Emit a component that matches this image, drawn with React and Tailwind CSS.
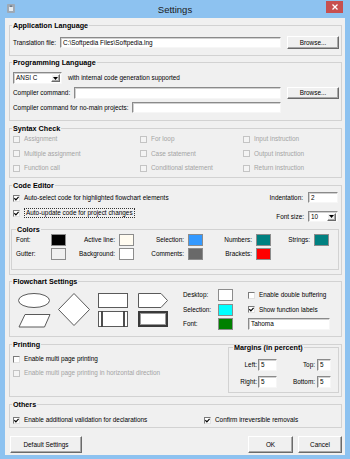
import React from 'react';

const sunken =
  'border border-t-[#8a8a8a] border-l-[#8a8a8a] border-r-[#f6f6f6] border-b-[#f6f6f6] shadow-[inset_1px_1px_0_#d0d0d0]';
const raised =
  'border border-t-white border-l-white border-r-[#6a6a6a] border-b-[#6a6a6a] shadow-[inset_-1px_-1px_0_#a8a8a8]';

function Group({ title, className = '', legend = 'ml-[2px]', body = '', children }) {
  return (
    <fieldset className={`border border-[#d2d2d2] ${className}`}>
      <legend className={`${legend} px-[1px] text-[7.2px] font-bold leading-[9px]`}>{title}</legend>
      <div className={body}>{children}</div>
    </fieldset>
  );
}

function Check({ label, checked, disabled, focus }) {
  return (
    <div className="flex items-center gap-[4px] whitespace-nowrap">
      <span
        className={`w-[7px] h-[7px] shrink-0 flex items-center justify-center border ${
          disabled
            ? 'border-[#c4c4c4] bg-[#f4f4f4]'
            : 'border-t-[#7a7a7a] border-l-[#7a7a7a] border-r-[#e2e2e2] border-b-[#e2e2e2] bg-white'
        }`}
      >
        {checked && (
          <svg width="5" height="5" viewBox="0 0 5 5">
            <path d="M0.4 2.2 L1.9 3.8 L4.6 0.9" fill="none" stroke="#000" strokeWidth="1.2" />
          </svg>
        )}
      </span>
      <span className={`${disabled ? 'text-[#a4a4a4]' : ''} ${focus ? 'border border-dotted border-[#333] px-[1px] leading-[8px]' : ''}`}>
        {label}
      </span>
    </div>
  );
}

function Input({ value = '', className = '' }) {
  return (
    <div className={`${sunken} bg-white flex items-center pl-[2px] overflow-hidden whitespace-nowrap ${className}`}>
      {value}
    </div>
  );
}

function Select({ value, className = '' }) {
  return (
    <div className={`${sunken} bg-white flex items-center justify-between pl-[2px] pr-[1px] ${className}`}>
      <span>{value}</span>
      <span className={`${raised} w-[9px] h-[8px] bg-[#f0f0f0] flex items-center justify-center`}>
        <svg width="5" height="3" viewBox="0 0 5 3">
          <polygon points="0,0 5,0 2.5,3" fill="#000" />
        </svg>
      </span>
    </div>
  );
}

function Button({ children, className = '' }) {
  return (
    <div className={`${raised} bg-[#f0f0f0] flex items-center justify-center whitespace-nowrap ${className}`}>
      {children}
    </div>
  );
}

function Swatch({ color }) {
  return <span className={`block w-[15px] h-[12px] border border-[#8c8c8c] ${color}`} />;
}

function ColorLabel({ children, first }) {
  return <span className={first ? 'whitespace-nowrap' : 'text-right pr-[4px] whitespace-nowrap'}>{children}</span>;
}

export default function App() {
  return (
    <div className="w-[350px] h-[459px] bg-[#8dc2f0] flex flex-col font-['Liberation_Sans',Arial,sans-serif] text-[6.4px] leading-[8px] text-black overflow-hidden">
      {/* title bar */}
      <div className="h-[18px] grid grid-cols-[1fr_auto_1fr] items-start">
        <div className="pl-[7px] pt-[4px]">
          <svg width="8" height="9" viewBox="0 0 8 9">
            <rect x="0" y="0" width="8" height="9" rx="1" fill="#9ea9b5" />
            <path d="M2 3 H6 V7 H2 Z" fill="#e6ebef" />
            <path d="M3 1.5 H5 V3 H3 Z" fill="#6f7b87" />
          </svg>
        </div>
        <div className="text-[9.5px] leading-[18px] pt-[1px] text-[#1b1b1b]">Settings</div>
        <div className="justify-self-end mr-[7px] mt-[1px] w-[17px] h-[12px] bg-[#c75050] flex items-center justify-center">
          <svg width="6" height="6" viewBox="0 0 6 6">
            <path d="M0.5 0.5 L5.5 5.5 M5.5 0.5 L0.5 5.5" stroke="#fff" strokeWidth="1.3" />
          </svg>
        </div>
      </div>

      {/* client */}
      <div className="flex-1 mx-[5px] bg-[#f0f0f0] pl-[4px] pr-[3px] flex flex-col">
        <Group title="Application Language" className="mt-[3px]" body="pl-[3px] pr-[2px] pt-[6px] pb-[6px]">
          <div className="flex items-center h-[13px]">
            <span className="whitespace-nowrap">Translation file:</span>
            <Input className="flex-1 ml-[4px] h-[11px]" value="C:\Softpedia Files\Softpedia.lng" />
            <Button className="w-[52px] ml-[6px] h-[13px]">Browse...</Button>
          </div>
        </Group>

        <Group title="Programming Language" className="mt-[2px]" body="pl-[3px] pr-[2px] pt-[5px] pb-[7px]">
          <div className="flex items-center h-[12px]">
            <Select className="w-[49px] h-[12px]" value="ANSI C" />
            <span className="ml-[6px] whitespace-nowrap">with internal code generation supported</span>
          </div>
          <div className="flex items-center h-[12px] mt-[3px]">
            <span className="whitespace-nowrap">Compiler command:</span>
            <Input className="flex-1 ml-[4px] h-[12px]" />
            <Button className="w-[52px] ml-[6px] h-[12px]">Browse...</Button>
          </div>
          <div className="flex items-center h-[11px] mt-[3px] mr-[58px]">
            <span className="whitespace-nowrap">Compiler command for no-main projects:</span>
            <Input className="flex-1 ml-[4px] h-[11px]" />
          </div>
        </Group>

        <Group title="Syntax Check" className="mt-[3px]" body="pl-[3px] pr-[2px] pt-[1px] pb-[4px]">
          <div className="grid grid-cols-[127px_103px_1fr] auto-rows-[10px] gap-y-[4.5px] items-center">
            <Check disabled label="Assignment" />
            <Check disabled label="For loop" />
            <Check disabled label="Input instruction" />
            <Check disabled label="Multiple assignment" />
            <Check disabled label="Case statement" />
            <Check disabled label="Output instruction" />
            <Check disabled label="Function call" />
            <Check disabled label="Conditional statement" />
            <Check disabled label="Return instruction" />
          </div>
        </Group>

        <Group title="Code Editor" className="mt-[3px]" body="pl-[3px] pr-[2px] pt-[2px] pb-[4px]">
          <div className="flex">
            <div className="flex flex-col">
              <div className="h-[12px] flex items-center">
                <Check checked label="Auto-select code for highlighted flowchart elements" />
              </div>
              <div className="h-[12px] mt-[3px] flex items-center">
                <Check checked focus label="Auto-update code for project changes" />
              </div>
            </div>
            <div className="ml-auto mr-[1px] flex flex-col items-end">
              <div className="h-[11px] flex items-center">
                <span>Indentation:</span>
                <Input className="w-[30px] h-[11px] ml-[5px]" value="2" />
              </div>
              <div className="h-[11px] mt-[8px] flex items-center">
                <span>Font size:</span>
                <Select className="w-[30px] h-[11px] ml-[4px]" value="10" />
              </div>
            </div>
          </div>
          <Group title="Colors" className="-ml-[2px] mt-[3px]" legend="ml-[4px]" body="pl-[4px] pb-[9px]">
            <div className="grid grid-cols-[35px_15px_53px_15px_54px_15px_53px_15px_43px_15px] auto-rows-[12px] gap-y-[2px] items-center">
              <ColorLabel first>Font:</ColorLabel>
              <Swatch color="bg-black" />
              <ColorLabel>Active line:</ColorLabel>
              <Swatch color="bg-[#fffbf0]" />
              <ColorLabel>Selection:</ColorLabel>
              <Swatch color="bg-[#3399ff]" />
              <ColorLabel>Numbers:</ColorLabel>
              <Swatch color="bg-[#008080]" />
              <ColorLabel>Strings:</ColorLabel>
              <Swatch color="bg-[#008080]" />
              <ColorLabel first>Gutter:</ColorLabel>
              <Swatch color="bg-[#f0f0f0]" />
              <ColorLabel>Background:</ColorLabel>
              <Swatch color="bg-white" />
              <ColorLabel>Comments:</ColorLabel>
              <Swatch color="bg-[#696969]" />
              <ColorLabel>Brackets:</ColorLabel>
              <Swatch color="bg-[#ff0000]" />
            </div>
          </Group>
        </Group>

        <Group title="Flowchart Settings" className="mt-[2px]" body="pl-[3px] pr-[2px] pt-[3px] pb-[6px]">
          <div className="flex items-start">
            <svg className="ml-[5px] mt-[3px] shrink-0" width="150" height="36" viewBox="0 0 150 36">
              <g fill="#fff" stroke="#5a5a5a" strokeWidth="1">
                <ellipse cx="16" cy="8.5" rx="15.5" ry="7" />
                <polygon points="7,22.5 32,22.5 26.5,35 1,35" />
                <polygon points="56,1.5 71.5,17.5 56,33.5 40.5,17.5" />
                <rect x="80.5" y="1.5" width="29" height="14" />
                <rect x="80.5" y="19.5" width="29" height="15" />
                <polygon points="120.5,1.5 143,1.5 149.5,8.5 143,15.5 120.5,15.5" />
                <rect x="121" y="20" width="28" height="14" stroke="#3a3a3a" strokeWidth="2" />
                <rect x="122.5" y="21.5" width="25" height="11" stroke="#9a9a9a" />
              </g>
              <line x1="84" y1="19.5" x2="84" y2="34.5" stroke="#222" strokeWidth="1.6" />
              <line x1="106" y1="19.5" x2="106" y2="34.5" stroke="#222" strokeWidth="1.6" />
            </svg>
            <div className="ml-[15px] grid grid-cols-[35px_15px_auto] auto-rows-[12px] gap-y-[2.5px] items-center">
              <span>Desktop:</span>
              <Swatch color="bg-white" />
              <div className="pl-[15px]">
                <Check label="Enable double buffering" />
              </div>
              <span>Selection:</span>
              <Swatch color="bg-[#00ffff]" />
              <div className="pl-[15px]">
                <Check checked label="Show function labels" />
              </div>
              <span>Font:</span>
              <Swatch color="bg-[#008000]" />
              <div className="pl-[15px]">
                <Input className="w-[82px] h-[12px]" value="Tahoma" />
              </div>
            </div>
          </div>
        </Group>

        <Group title="Printing" className="mt-[3px]" body="pl-[3px] pr-[2px] pb-[3px]">
          <div className="flex items-start">
            <div className="flex-1 pt-[5px] flex flex-col gap-[4px]">
              <div className="h-[10px] flex items-center">
                <Check label="Enable multi page printing" />
              </div>
              <div className="h-[10px] flex items-center">
                <Check disabled label="Enable multi page printing in horizontal direction" />
              </div>
            </div>
            <Group title="Margins (in percent)" className="w-[111px] -mt-[6px] shrink-0" legend="ml-[4px]" body="pt-[7px] pb-[4px]">
              <div className="grid grid-cols-[29px_19px_40px_14px] auto-rows-[12px] gap-y-[5px] items-center">
                <span className="text-right pr-[1px]">Left:</span>
                <Input className="h-[12px]" value="5" />
                <span className="text-right pr-[2px]">Top:</span>
                <Input className="h-[12px]" value="5" />
                <span className="text-right pr-[1px]">Right:</span>
                <Input className="h-[12px]" value="5" />
                <span className="text-right pr-[2px]">Bottom:</span>
                <Input className="h-[12px]" value="5" />
              </div>
            </Group>
          </div>
        </Group>

        <Group title="Others" className="mt-[3px]" body="pl-[3px] pr-[2px] pt-[6px] pb-[2px]">
          <div className="grid grid-cols-[191px_1fr] h-[10px] items-center">
            <Check checked label="Enable additional validation for declarations" />
            <Check checked label="Confirm irreversible removals" />
          </div>
        </Group>

        <div className="mt-[8px] flex h-[17px]">
          <Button className="ml-[1px] w-[72px] h-[17px]">Default Settings</Button>
          <Button className="ml-auto w-[45px] h-[17px]">OK</Button>
          <Button className="ml-[5px] w-[44px] h-[17px]">Cancel</Button>
        </div>
      </div>
      <div className="h-[4px] shrink-0" />
    </div>
  );
}
